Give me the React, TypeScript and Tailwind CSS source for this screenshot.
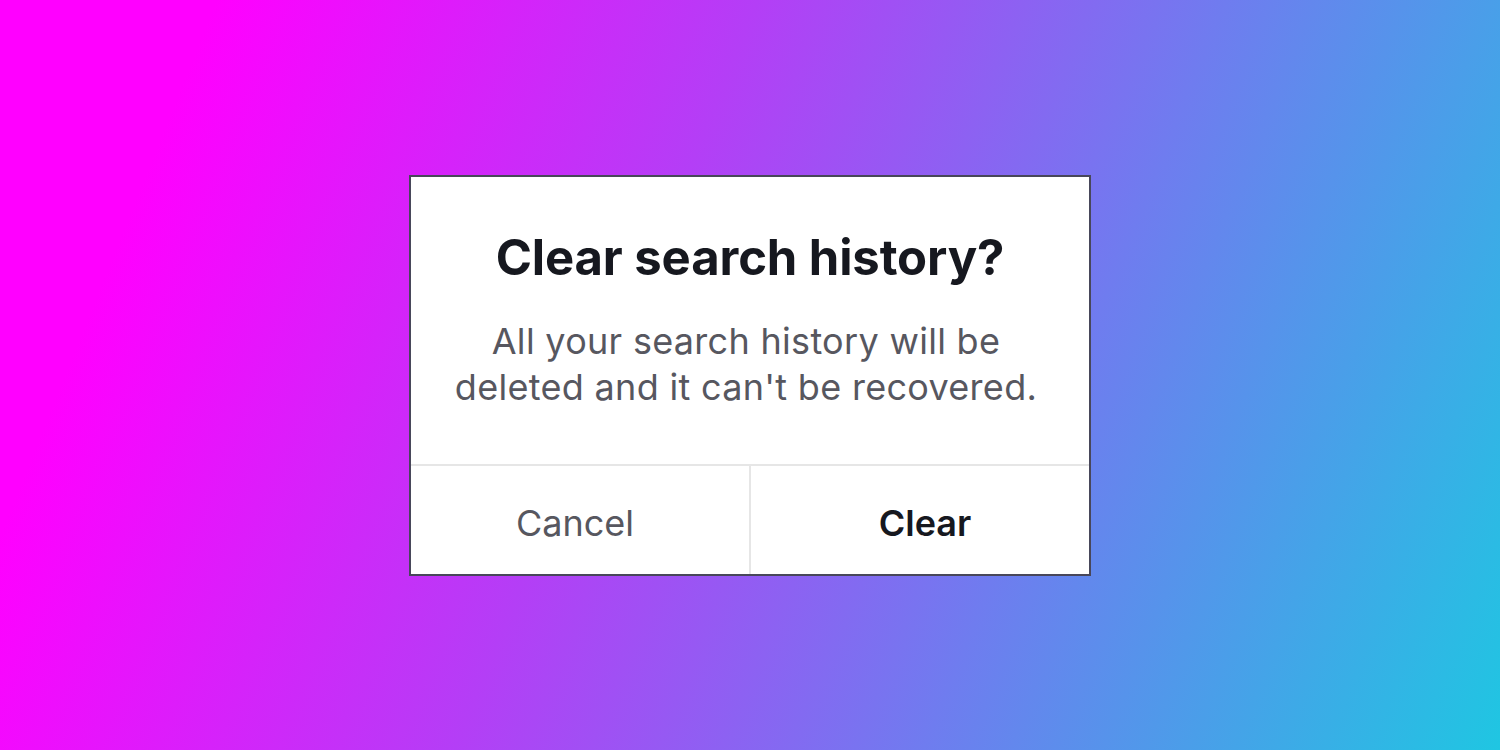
export default function App() {
  return (
    <div className="w-full h-[750px] flex items-center justify-center bg-[linear-gradient(112deg,#ff00ff_12%,#b43ef6_42%,#6f7cef_68%,#1fc6e2_100%)]">
      {/* Confirm dialog */}
      <div className="w-[682px] bg-white border-2 border-[#48475a] flex flex-col" style={{ fontFamily: 'Inter, "Liberation Sans", sans-serif' }}>
        <div className="h-[287px] flex flex-col items-center pt-[51px] pr-[8px]">
          <h1 className="text-[49px] leading-[60px] font-bold text-[#16181f] tracking-[-0.1px] pl-[8px]">Clear search history?</h1>
          <p className="mt-[30px] text-[36px] leading-[46px] text-[#57575f] text-center tracking-[0.3px]">
            All your search history will be
            <br />
            deleted and it can't be recovered.
          </p>
        </div>
        <div className="h-[110px] flex border-t-2 border-[#e6e6e6]">
          <button className="flex-1 flex items-center justify-center pt-[6px] pr-[10px] text-[36px] text-[#57575f] border-r-2 border-[#e6e6e6]">Cancel</button>
          <button className="flex-1 flex items-center justify-center pt-[6px] pl-[10px] text-[36px] font-semibold text-[#16181f]">Clear</button>
        </div>
      </div>
    </div>
  )
}
